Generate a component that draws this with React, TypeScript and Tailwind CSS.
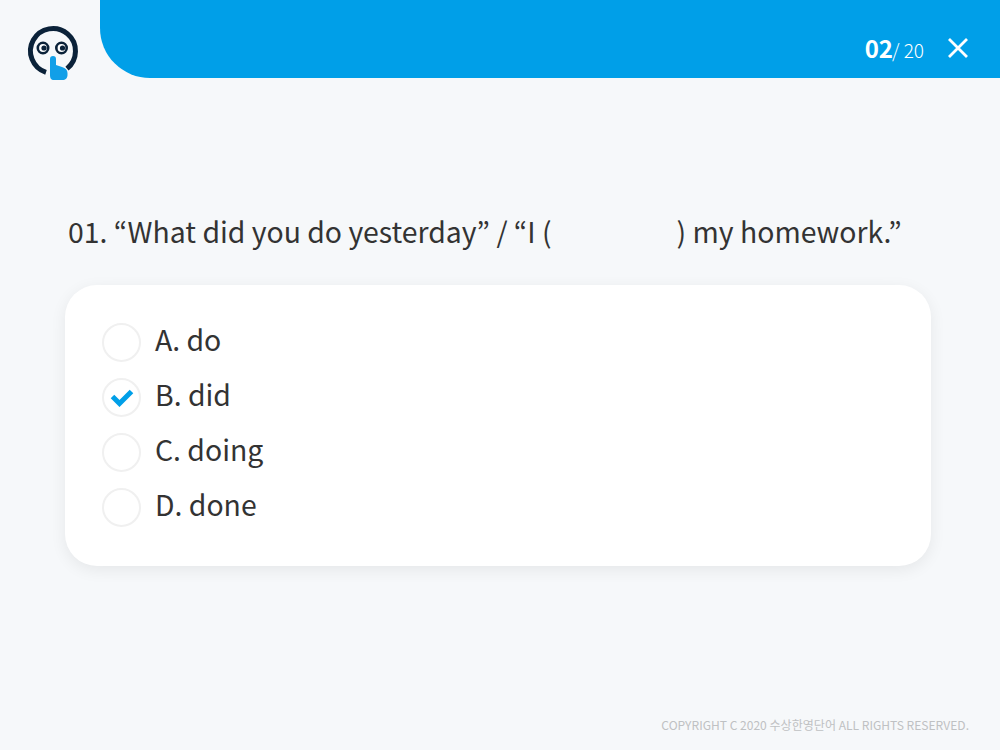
const font = "font-['Noto_Sans_CJK_KR','Noto_Sans',sans-serif]";

const options = [
  { label: "A. do", checked: false },
  { label: "B. did", checked: true },
  { label: "C. doing", checked: false },
  { label: "D. done", checked: false },
];

function Logo() {
  return (
    <svg width="56" height="60" viewBox="0 0 56 60" fill="none">
      <path d="M22 49.400 A22.500 22.500 0 1 1 43 45.600" stroke="#0b2239" strokeWidth="5" />
      <circle cx="19" cy="25" r="5.200" stroke="#0b2239" strokeWidth="2.600" fill="#fff" />
      <circle cx="37.500" cy="25" r="5.200" stroke="#0b2239" strokeWidth="2.600" fill="#fff" />
      <circle cx="20" cy="25" r="2.600" fill="#0b2239" />
      <circle cx="38.500" cy="25" r="2.600" fill="#0b2239" />
      <path d="M26 36 a3 3 0 0 1 6 0 v6 l6 2 c3.500 1 5.500 3 5.500 6 v2 c0 3-2 5-5 5 h-8.500 c-3 0-4-2-4-5 z" fill="#119fe8" />
    </svg>
  );
}

export default function App() {
  return (
    <div className={`w-[1000px] h-[750px] bg-[#f6f8fa] flex flex-col overflow-hidden ${font}`}>
      <div className="flex h-[78px] shrink-0">
        <div className="w-[100px] shrink-0 pl-[24px] pt-[23px]">
          <Logo />
        </div>
        <div className="flex-1 bg-[#009fe8] rounded-bl-[50px] flex items-center justify-end pt-[18px] pr-[31px] text-white">
          <span className="text-[24px] font-bold leading-none -mt-[1px]">02</span>
          <span className="text-[19px] font-light leading-none -ml-[1px] mt-[3px]">/ 20</span>
          <svg className="ml-[23px]" width="22" height="22" viewBox="0 0 22 22" fill="none">
            <path d="M2 2 L20 20 M20 2 L2 20" stroke="#fff" strokeWidth="2.800" />
          </svg>
        </div>
      </div>

      <p className="mt-[131px] ml-[68px] text-[28.400px] leading-[44px] text-[#333] whitespace-pre">
        01. “What did you do yesterday” / “I (<span className="inline-block w-[125px]" />) my homework.”
      </p>

      <div className="mt-[32px] ml-[65px] w-[866px] h-[281px] bg-white rounded-[32px] shadow-[0_4px_16px_rgba(0,0,0,0.07)] pl-[37px] pt-[28px] flex flex-col">
        {options.map((o) => (
          <div key={o.label} className="flex items-center h-[55px]">
            <div className="w-[39px] h-[39px] rounded-full border-2 border-[#f0f0f0] bg-white flex items-center justify-center mt-[3px]">
              {o.checked && (
                <svg width="24" height="19" viewBox="0 0 24 19" fill="none">
                  <path d="M2.500 8.500 L9.500 15.500 L21.500 3.500" stroke="#009fe8" strokeWidth="5" />
                </svg>
              )}
            </div>
            <span className="ml-[14px] -mt-[3px] text-[28.400px] leading-none text-[#333]">{o.label}</span>
          </div>
        ))}
      </div>

      <p className="mt-auto mb-[15px] mr-[31px] text-right text-[12.050px] leading-[20px] text-[#bfc1c3]">
        COPYRIGHT C 2020 수상한영단어 ALL RIGHTS RESERVED.
      </p>
    </div>
  );
}
